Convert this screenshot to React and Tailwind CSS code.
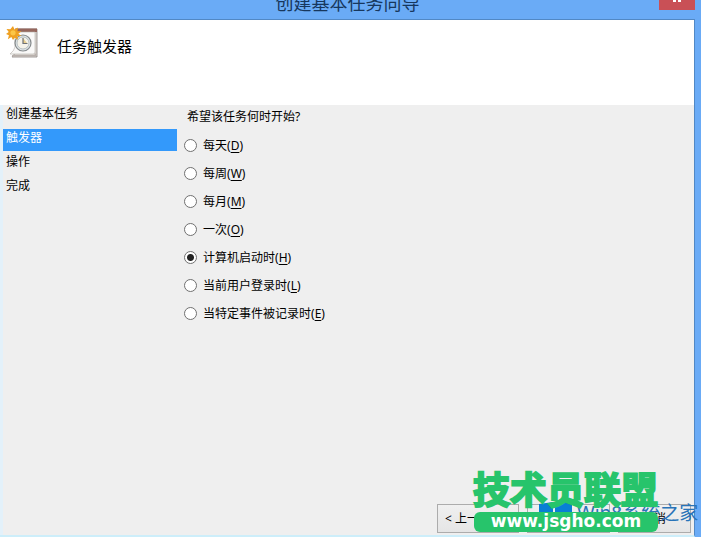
import { useState } from 'react'

const steps = ['创建基本任务', '触发器', '操作', '完成']

const triggers = [
  { id: 'daily', label: '每天', hotkey: 'D' },
  { id: 'weekly', label: '每周', hotkey: 'W' },
  { id: 'monthly', label: '每月', hotkey: 'M' },
  { id: 'once', label: '一次', hotkey: 'O' },
  { id: 'startup', label: '计算机启动时', hotkey: 'H' },
  { id: 'logon', label: '当前用户登录时', hotkey: 'L' },
  { id: 'event', label: '当特定事件被记录时', hotkey: 'E' },
]

function TaskIcon() {
  return (
    <svg width="34" height="34" viewBox="0 0 34 34" aria-hidden="true">
      <path d="M10 3h21v28H6l4-5z" fill="#ddd7d3" stroke="#8b8481" strokeWidth=".8" />
      <path d="M9 2.5h22v3.5H9z" fill="#95665c" />
      <path d="M9 6h20v20q0 2-2 2H4q4-3 5-7z" fill="#faf9f8" stroke="#b4aeaa" strokeWidth=".6" />
      <path d="M6 29h22l2-2v3.5H6z" fill="#b9b1ad" />
      <circle cx="17" cy="17" r="8" fill="#dfe5e7" stroke="#84898b" strokeWidth="1.2" />
      <circle cx="17" cy="17" r="6" fill="#f5f3ea" stroke="#a9b2b6" strokeWidth=".8" />
      <path d="M17 12l4 5h-4z" fill="#e8cf8e" />
      <path d="M17 12v5.5h4.5" fill="none" stroke="#6d7176" strokeWidth="1.2" />
      <path
        d="M7 0l1.5 3.5L12 1.5l-.6 3.8 4-.1-3 2.5 3.1 2.2-4 .2.5 3.6-3.3-2L7 14l-1.6-3-3.5 2.2 1-4L0 8l2.7-2.1L.5 3l3.8.3z"
        fill="#efa021"
      />
      <circle cx="7" cy="6.8" r="2.6" fill="#fcc646" />
    </svg>
  )
}

function WindowsLogo() {
  return (
    <svg width="34" height="34" viewBox="0 0 34 34" aria-hidden="true">
      <path d="M0 5l14-2v13H0zM16 3l17-3v16H16zM0 18h14v11H0zM16 18h17v11H16z" fill="#087fd5" />
    </svg>
  )
}

function WizardButton({ className, children }) {
  return (
    <button
      type="button"
      className={`h-[29px] border border-[#acacac] bg-linear-to-b from-[#f0f0f0] to-[#e5e5e5] text-left whitespace-nowrap ${className}`}
    >
      {children}
    </button>
  )
}

function Watermark() {
  return (
    <div className="pointer-events-none absolute right-0 bottom-0 h-[70px] w-[232px]">
      <div className="absolute top-[32px] left-[70px]">
        <WindowsLogo />
      </div>
      <span className="absolute top-[34px] left-[108px] text-[19px] leading-6 whitespace-nowrap text-[#2873b8]">
        Win8系统之家
      </span>
      <span className="absolute top-[2px] left-[4px] text-[37px] leading-[42px] font-bold whitespace-nowrap text-[#27c46b] [-webkit-text-stroke:2px_#27c46b]">
        技术员联盟
      </span>
      <span className="absolute top-[45px] left-[5px] h-[20px] w-[184px] rounded-[6px] bg-[#27c46b] text-center font-[family-name:'DejaVu_Sans',sans-serif] text-[17px] leading-[18px] font-bold text-white">
        www.jsgho.com
      </span>
    </div>
  )
}

export default function App() {
  const [trigger, setTrigger] = useState('startup')

  return (
    <div className="relative flex min-h-screen flex-col overflow-hidden bg-[#6aabf6] font-[family-name:'Noto_Sans','Noto_Sans_CJK_SC',sans-serif] text-[12px] leading-4 text-black">
      <header className="relative mr-[6px] flex h-[19px] items-start justify-center overflow-hidden">
        <h1 className="-mt-[9px] text-[18px] leading-6 text-[#17375d]">创建基本任务向导</h1>
        <button
          type="button"
          aria-label="关闭"
          className="absolute top-0 right-0 flex h-[10px] w-[36px] items-start justify-center bg-[#c95056] text-white"
        >
          <svg width="10" height="3" viewBox="0 0 10 3" aria-hidden="true">
            <path d="M1 0h3v2H1zM6 0h3v2H6z" fill="currentColor" />
          </svg>
        </button>
      </header>

      <div className="mr-[6px] flex flex-1 flex-col border-t border-r border-b-2 border-t-[#5188c5] border-r-[#5188c5] border-b-[#cdeefa] bg-[#efefef]">
        <div className="flex h-[85px] items-start bg-white pt-[6px] pl-[6px]">
          <TaskIcon />
          <h2 className="mt-[8px] ml-[17px] text-[15px] leading-6">任务触发器</h2>
        </div>

        <div className="flex flex-1 border-l-[3px] border-[#e3f1fa]">
          <ol className="w-[174px] shrink-0">
            {steps.map((step, i) => (
              <li key={step} className="h-6">
                <div
                  className={
                    i === 1
                      ? 'h-[22px] bg-[#3399fb] pl-[3px] leading-[18px] text-white'
                      : 'h-[22px] pl-[3px] leading-[18px]'
                  }
                >
                  {step}
                </div>
              </li>
            ))}
          </ol>

          <div className="flex min-w-0 flex-1 flex-col">
            <fieldset className="pl-[7px]">
              <legend className="mb-[6px] h-[20px] pl-[3px] leading-[24px]">希望该任务何时开始?</legend>
              {triggers.map(t => (
                <label key={t.id} className="flex h-7 items-center gap-[6px]">
                  <input
                    type="radio"
                    name="trigger"
                    value={t.id}
                    checked={trigger === t.id}
                    onChange={() => setTrigger(t.id)}
                    className="size-[13px] appearance-none rounded-full border border-[#707070] bg-white checked:bg-[radial-gradient(circle,#222_3px,#fff_4px)]"
                  />
                  <span className="pt-[2px]">
                    {t.label}(<u className="underline-offset-2">{t.hotkey}</u>)
                  </span>
                </label>
              ))}
            </fieldset>

            <footer className="mt-auto mr-[3px] mb-[2px] flex justify-end gap-2">
              <WizardButton className="w-[82px] pl-[7px]">&lt; 上一步(<u>B</u>)</WizardButton>
              <WizardButton className="w-[83px] pl-[7px]">下一步(<u>N</u>) &gt;</WizardButton>
              <WizardButton className="w-[73px] pl-[23px]">取消</WizardButton>
            </footer>
          </div>
        </div>
      </div>

      <Watermark />
    </div>
  )
}
